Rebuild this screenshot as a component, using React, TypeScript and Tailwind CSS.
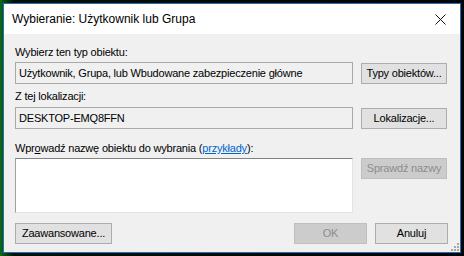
import React from 'react';

const font = { fontFamily: '"Liberation Sans", Arial, sans-serif' };

const Btn: React.FC<{ label: React.ReactNode; w: string; disabled?: boolean }> = ({ label, w, disabled }) => (
  <div
    className={`${w} h-[21px] flex items-center justify-center whitespace-nowrap border ${
      disabled ? 'bg-[#cccccc] border-[#bfbfbf] text-[#8d8d8d]' : 'bg-[#e1e1e1] border-[#adadad] text-black'
    }`}
  >
    {label}
  </div>
);

export default function App() {
  return (
    <div
      className="w-[464px] h-[256px] p-[3px] bg-gradient-to-r from-[#0f6a18] from-[0%] via-[#031206] via-[3%] to-[#020304]"
      style={font}
    >
      <div className="w-full h-full flex flex-col border border-[#2470b8] bg-[#f0f0f0] overflow-hidden">
        {/* title bar */}
        <div className="h-[30px] shrink-0 bg-white flex items-center justify-between pl-[8px] pr-[14px]">
          <span className="text-[12px] text-black">Wybieranie: Użytkownik lub Grupa</span>
          <svg width="11" height="11" viewBox="0 0 11 11" className="mt-[1px]">
            <path d="M0.5 0.5L10.5 10.5M10.5 0.5L0.5 10.5" stroke="#111" strokeWidth="1" fill="none" />
          </svg>
        </div>

        {/* body */}
        <div className="relative flex-1 flex flex-col pl-[11px] pr-[12px] pt-[11px] text-[11px] tracking-[-0.2px] leading-[15px] text-black">
          <div>Wybierz ten typ obiektu:</div>
          <div className="mt-[2px] flex items-center gap-[8px]">
            <div className="w-[338px] h-[22px] border border-[#a9a9a9] flex items-center px-[3px] whitespace-nowrap">
              Użytkownik, Grupa, lub Wbudowane zabezpieczenie główne
            </div>
            <Btn label="Typy obiektów..." w="w-[86px]" />
          </div>

          <div className="mt-[5px]">Z tej lokalizacji:</div>
          <div className="mt-[3px] flex items-center gap-[8px]">
            <div className="w-[338px] h-[22px] border border-[#a9a9a9] flex items-center px-[3px]">
              DESKTOP-EMQ8FFN
            </div>
            <Btn label="Lokalizacje..." w="w-[86px]" />
          </div>

          <div className="mt-[12px] whitespace-nowrap">
            Wpr<span className="underline">o</span>wadź nazwę obiektu do wybrania (
            <span className="text-[#0066cc] underline">przykłady</span>):
          </div>
          <div className="mt-[2px] flex items-start gap-[8px]">
            <div className="w-[338px] h-[55px] bg-white border border-[#e3e3e3] border-t-[#828282] border-l-[#a0a0a0]" />
            <Btn label="Sprawdź nazwy" w="w-[86px]" disabled />
          </div>

          <div className="mt-[10px] flex items-center">
            <Btn label="Zaawansowane..." w="w-[97px]" />
            <div className="flex-1" />
            <div className="flex gap-[8px]">
              <Btn label="OK" w="w-[73px]" disabled />
              <Btn label="Anuluj" w="w-[73px]" />
            </div>
          </div>

          <svg width="9" height="9" viewBox="0 0 9 9" className="absolute right-[1px] bottom-[1px]">
            <g fill="#a8a8a8">
              <rect x="7" y="1" width="2" height="2" />
              <rect x="4" y="4" width="2" height="2" />
              <rect x="7" y="4" width="2" height="2" />
              <rect x="1" y="7" width="2" height="2" />
              <rect x="4" y="7" width="2" height="2" />
              <rect x="7" y="7" width="2" height="2" />
            </g>
          </svg>
        </div>
      </div>
    </div>
  );
}
